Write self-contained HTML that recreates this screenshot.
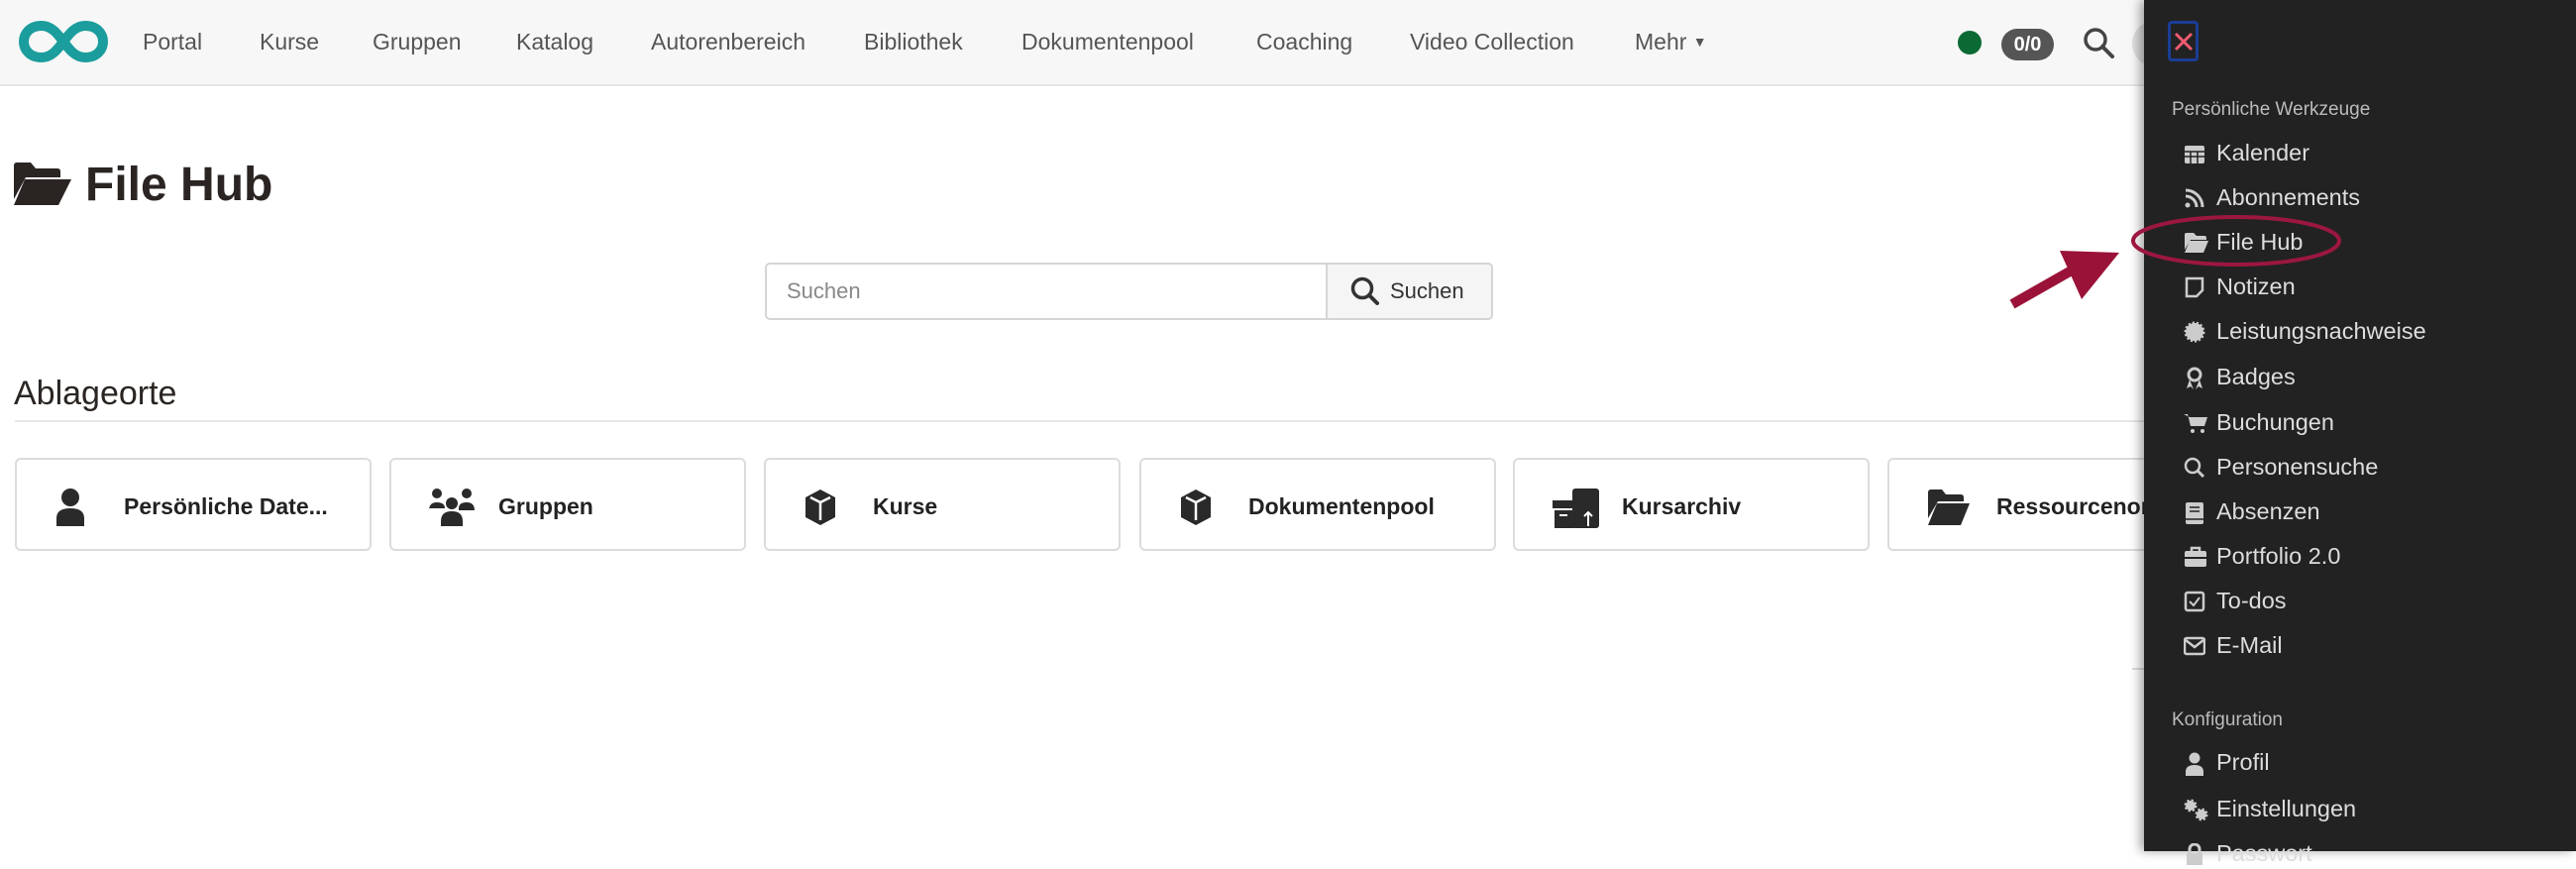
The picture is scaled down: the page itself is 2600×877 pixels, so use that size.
<!DOCTYPE html>
<html><head><meta charset="utf-8"><style>
*{margin:0;padding:0;box-sizing:border-box}
body{width:2600px;height:859px;overflow:hidden;background:#fff;font-family:"Liberation Sans",Arial,sans-serif;position:relative}
.abs{position:absolute}
.nav{left:0;top:0;width:2600px;height:87px;background:#f7f7f7;border-bottom:2px solid #e6e6e6}
.ni{position:absolute;top:29px;font-size:23px;color:#555;white-space:nowrap}
.card{position:absolute;top:462px;width:360px;height:94px;border:2px solid #dcdcdc;border-radius:6px;background:#fff}
.card svg{position:absolute;left:38px;top:29px}
.card span{position:absolute;left:108px;top:34px;font-size:23px;font-weight:bold;color:#222;white-space:nowrap}
.drawer{left:2164px;top:0;width:436px;height:859px;background:#222;box-shadow:-4px 0 10px rgba(0,0,0,.35)}
.dh{position:absolute;left:28px;font-size:19px;color:#bbb}
.di{position:absolute;left:40px;height:30px;font-size:23.5px;color:#ddd;white-space:nowrap}
.di svg{position:absolute;left:0;top:4px}
.di span{position:absolute;left:33px;top:1px}
</style></head><body>
<div class="abs nav">
 <svg class="abs" style="left:18px;top:20px" width="92" height="44" viewBox="0 0 92 44"><path d="M24 6C12 6 6 14 6 22s6 16 18 16c10 0 16-8 22-16s12-16 22-16c12 0 18 8 18 16s-6 16-18 16c-10 0-16-8-22-16S34 6 24 6z" fill="none" stroke="#1a9d9c" stroke-width="10"/></svg>
 <div class="ni" style="left:144px">Portal</div>
 <div class="ni" style="left:262px">Kurse</div>
 <div class="ni" style="left:376px">Gruppen</div>
 <div class="ni" style="left:521px">Katalog</div>
 <div class="ni" style="left:657px">Autorenbereich</div>
 <div class="ni" style="left:872px">Bibliothek</div>
 <div class="ni" style="left:1031px">Dokumentenpool</div>
 <div class="ni" style="left:1268px">Coaching</div>
 <div class="ni" style="left:1423px">Video Collection</div>
 <div class="ni" style="left:1650px">Mehr <span style="font-size:14px;position:relative;top:-3px">▼</span></div>
 <div class="abs" style="left:1976px;top:31px;width:24px;height:24px;border-radius:50%;background:#0b6a34"></div>
 <div class="abs" style="left:2020px;top:29px;width:53px;height:32px;border-radius:16px;background:#555;color:#fff;font-weight:bold;font-size:20px;text-align:center;line-height:32px">0/0</div>
 <svg class="abs" style="left:2102px;top:27px" width="34" height="32" viewBox="0 0 34 32"><circle cx="13" cy="13" r="10" fill="none" stroke="#444" stroke-width="3.5"/><path d="M20 20l10 10" stroke="#444" stroke-width="4" stroke-linecap="round"/></svg>
 <div class="abs" style="left:2152px;top:22px;width:40px;height:44px;border-radius:50%;background:#ddd"></div>
</div>

<svg class="abs" style="left:12px;top:163px" width="62" height="46" viewBox="0 0 62 46"><path d="M2 4q0-3 3-3h14l5 6h22q3 0 3 3v6H14L2 38z" fill="#2a2522"/><path d="M13 18h47l-13 26H2z" fill="#2a2522"/></svg>
<div class="abs" style="left:86px;top:159px;font-size:48px;font-weight:bold;color:#2a2522">File Hub</div>

<div class="abs" style="left:772px;top:265px;width:735px;height:58px;border:2px solid #d5d5d5;border-radius:5px;background:#fff"></div>
<div class="abs" style="left:1338px;top:265px;width:169px;height:58px;border:2px solid #d5d5d5;border-radius:0 5px 5px 0;background:#f5f5f5"></div>
<div class="abs" style="left:794px;top:281px;font-size:22px;color:#888">Suchen</div>
<svg class="abs" style="left:1362px;top:278px" width="32" height="32" viewBox="0 0 32 32"><circle cx="13" cy="13" r="9.5" fill="none" stroke="#333" stroke-width="3.5"/><path d="M20 20l8 8" stroke="#333" stroke-width="4" stroke-linecap="round"/></svg>
<div class="abs" style="left:1403px;top:281px;font-size:22px;color:#333">Suchen</div>

<div class="abs" style="left:14px;top:378px;font-size:34px;color:#2a2522">Ablageorte</div>
<div class="abs" style="left:15px;top:424px;width:2150px;height:2px;background:#e6e6e6"></div>

<div class="card" style="left:15px"><svg width="32" height="38" viewBox="0 0 32 38"><circle cx="16" cy="9" r="9" fill="#2a2a2a"/><path d="M2 38v-8q0-10 14-10t14 10v8z" fill="#2a2a2a"/></svg><span>Persönliche Date...</span></div>
<div class="card" style="left:393px"><svg width="46" height="38" viewBox="0 0 46 38"><circle cx="8" cy="5" r="5" fill="#2a2a2a"/><circle cx="38" cy="5" r="5" fill="#2a2a2a"/><circle cx="23" cy="15" r="6" fill="#2a2a2a"/><path d="M0 22q0-8 8-8t8 6H0zM30 20q0-6 8-6t8 8H30z" fill="#2a2a2a"/><path d="M12 38v-5q0-10 11-10t11 10v5z" fill="#2a2a2a"/></svg><span>Gruppen</span></div>
<div class="card" style="left:771px"><svg width="34" height="38" viewBox="0 0 34 38"><path d="M17 1L32 9v20L17 37 2 29V9z" fill="#2a2a2a"/><path d="M17 14l10-5M17 14L7 9M17 14v18" stroke="#fff" stroke-width="2.5" fill="none"/></svg><span>Kurse</span></div>
<div class="card" style="left:1150px"><svg width="34" height="38" viewBox="0 0 34 38"><path d="M17 1L32 9v20L17 37 2 29V9z" fill="#2a2a2a"/><path d="M17 14l10-5M17 14L7 9M17 14v18" stroke="#fff" stroke-width="2.5" fill="none"/></svg><span>Dokumentenpool</span></div>
<div class="card" style="left:1527px"><svg width="48" height="40" viewBox="0 0 48 40"><rect x="20" y="0" width="27" height="40" rx="3" fill="#2a2a2a"/><rect x="0" y="12" width="24" height="8" fill="#2a2a2a"/><rect x="2" y="22" width="20" height="18" fill="#2a2a2a"/><path d="M7 27h8" stroke="#fff" stroke-width="2"/><path d="M36 38V24m-4 4l4-4 4 4" stroke="#fff" stroke-width="2" fill="none"/></svg><span>Kursarchiv</span></div>
<div class="card" style="left:1905px"><svg width="44" height="38" viewBox="0 0 44 38"><path d="M1 4q0-3 3-3h11l4 5h15q3 0 3 3v4H11L1 30z" fill="#2a2a2a"/><path d="M10 15h33l-9 22H1z" fill="#2a2a2a"/></svg><span>Ressourcenordner</span></div>

<div class="abs" style="left:2152px;top:674px;width:14px;height:2px;background:#ddd"></div>

<div class="abs drawer">
 <div class="abs" style="left:24px;top:21px;width:31px;height:41px;border:3px solid #1b3d96;border-radius:4px"></div>
 <svg class="abs" style="left:29px;top:31px" width="22" height="22" viewBox="0 0 22 22"><path d="M3 3l16 16M19 3L3 19" stroke="#ef5a6f" stroke-width="3"/></svg>
 <div class="dh" style="top:100px">Persönliche Werkzeuge</div>
 <div class="di" style="top:140px"><svg width="22" height="22" viewBox="0 0 22 22"><rect x="1" y="3" width="20" height="18" rx="2" fill="#ccc"/><path d="M1 9h20M1 14h20M7 9v12M14 9v12" stroke="#222" stroke-width="1.5"/></svg><span>Kalender</span></div>
 <div class="di" style="top:185px"><svg width="22" height="22" viewBox="0 0 22 22"><circle cx="4" cy="18" r="2.5" fill="#ccc"/><path d="M2 9a11 11 0 0 1 11 11M2 3a17 17 0 0 1 17 17" stroke="#ccc" stroke-width="3" fill="none"/></svg><span>Abonnements</span></div>
 <div class="di" style="top:230px"><svg width="26" height="22" viewBox="0 0 26 22"><path d="M1 3q0-2 2-2h7l3 3h8q2 0 2 2v2H7L1 18z" fill="#ccc"/><path d="M6 9h19l-5 12H1z" fill="#ccc"/></svg><span>File Hub</span></div>
 <div class="di" style="top:275px"><svg width="22" height="22" viewBox="0 0 22 22"><path d="M3 2h16v12l-6 6H3z" fill="none" stroke="#ccc" stroke-width="2.5"/></svg><span>Notizen</span></div>
 <div class="di" style="top:320px"><svg width="22" height="22" viewBox="0 0 22 22"><circle cx="11" cy="11" r="9" fill="#ccc" stroke="#ccc" stroke-width="3" stroke-dasharray="2 2"/></svg><span>Leistungsnachweise</span></div>
 <div class="di" style="top:366px"><svg width="22" height="24" viewBox="0 0 22 24"><circle cx="11" cy="8" r="6" fill="none" stroke="#ccc" stroke-width="3"/><path d="M6 13l-3 9 4-2 3 3M16 13l3 9-4-2-3 3" fill="#ccc"/></svg><span>Badges</span></div>
 <div class="di" style="top:412px"><svg width="24" height="22" viewBox="0 0 24 22"><path d="M0 2h4l3 12h14l3-9H6" fill="#ccc"/><circle cx="9" cy="19" r="2" fill="#ccc"/><circle cx="19" cy="19" r="2" fill="#ccc"/></svg><span>Buchungen</span></div>
 <div class="di" style="top:457px"><svg width="22" height="22" viewBox="0 0 22 22"><circle cx="9" cy="9" r="7" fill="none" stroke="#ccc" stroke-width="2.5"/><path d="M14 14l6 6" stroke="#ccc" stroke-width="3"/></svg><span>Personensuche</span></div>
 <div class="di" style="top:502px"><svg width="22" height="24" viewBox="0 0 22 24"><rect x="2" y="1" width="18" height="22" rx="2" fill="#ccc"/><path d="M6 6h10M6 10h10M2 18h18" stroke="#222" stroke-width="1.5"/></svg><span>Absenzen</span></div>
 <div class="di" style="top:547px"><svg width="24" height="22" viewBox="0 0 24 22"><rect x="1" y="5" width="22" height="16" rx="2" fill="#ccc"/><path d="M8 5V2h8v3" stroke="#ccc" stroke-width="2.5" fill="none"/><path d="M1 12h22" stroke="#222" stroke-width="2"/></svg><span>Portfolio 2.0</span></div>
 <div class="di" style="top:592px"><svg width="22" height="22" viewBox="0 0 22 22"><rect x="2" y="2" width="18" height="18" rx="2" fill="none" stroke="#ccc" stroke-width="2.5"/><path d="M6 11l4 4 6-8" stroke="#ccc" stroke-width="2" fill="none"/></svg><span>To-dos</span></div>
 <div class="di" style="top:637px"><svg width="22" height="22" viewBox="0 0 22 22"><rect x="1" y="3" width="20" height="16" rx="2" fill="none" stroke="#ccc" stroke-width="2.5"/><path d="M2 5l9 7 9-7" stroke="#ccc" stroke-width="2.5" fill="none"/></svg><span>E-Mail</span></div>
 <div class="dh" style="top:716px">Konfiguration</div>
 <div class="di" style="top:755px"><svg width="22" height="24" viewBox="0 0 22 24"><circle cx="11" cy="6" r="5.5" fill="#ccc"/><path d="M2 24v-4q0-7 9-7t9 7v4z" fill="#ccc"/></svg><span>Profil</span></div>
 <div class="di" style="top:802px"><svg width="26" height="24" viewBox="0 0 26 24"><circle cx="7" cy="7" r="5" fill="#ccc" stroke="#ccc" stroke-width="3" stroke-dasharray="2 2"/><circle cx="18" cy="16" r="5" fill="#ccc" stroke="#ccc" stroke-width="3" stroke-dasharray="2 2"/></svg><span>Einstellungen</span></div>
 <div class="di" style="top:847px"><svg width="22" height="24" viewBox="0 0 22 24"><path d="M6 10V6a5 5 0 0 1 10 0v4" stroke="#ccc" stroke-width="3" fill="none"/><rect x="3" y="10" width="16" height="12" fill="#ccc"/></svg><span>Passwort</span></div>
</div>

<svg class="abs" style="left:2020px;top:210px" width="360" height="110" viewBox="2020 210 360 110">
 <ellipse cx="2257" cy="243" rx="104" ry="24" fill="none" stroke="#9c1740" stroke-width="4"/>
 <path d="M2031 307l58-33" stroke="#9b1239" stroke-width="10"/>
 <path d="M2139 255l-60-2 22 49z" fill="#9b1239"/>
</svg>
</body></html>
